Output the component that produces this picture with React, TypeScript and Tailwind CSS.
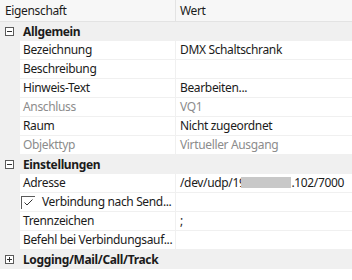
import React from "react";

type Row =
  | { kind: "cat"; label: string; open: boolean }
  | { kind: "item"; label: string; value?: React.ReactNode; dim?: boolean; check?: boolean };

const rows: Row[] = [
  { kind: "cat", label: "Allgemein", open: true },
  { kind: "item", label: "Bezeichnung", value: "DMX Schaltschrank" },
  { kind: "item", label: "Beschreibung" },
  { kind: "item", label: "Hinweis-Text", value: "Bearbeiten..." },
  { kind: "item", label: "Anschluss", value: "VQ1", dim: true },
  { kind: "item", label: "Raum", value: "Nicht zugeordnet" },
  { kind: "item", label: "Objekttyp", value: "Virtueller Ausgang", dim: true },
  { kind: "cat", label: "Einstellungen", open: true },
  {
    kind: "item",
    label: "Adresse",
    value: (
      <span className="relative">
        /dev/udp/19
        <span className="inline-block w-[50px] h-[11px] bg-[#c8c8c8] -ml-[4px] align-[-1px]" />
        .102/7000
      </span>
    ),
  },
  { kind: "item", label: "Verbindung nach Send...", check: true },
  { kind: "item", label: "Trennzeichen", value: ";" },
  { kind: "item", label: "Befehl bei Verbindungsauf..." },
  { kind: "cat", label: "Logging/Mail/Call/Track", open: false },
];

const Expander: React.FC<{ open: boolean }> = ({ open }) => (
  <span className="relative w-[9px] h-[9px] border border-[#5a5a5a] bg-white box-border ml-[5px] mr-[9px] shrink-0">
    <span className="absolute left-[1px] top-[3px] w-[5px] h-px bg-[#333]" />
    {!open && <span className="absolute left-[3px] top-[1px] w-px h-[5px] bg-[#333]" />}
  </span>
);

export default function App() {
  return (
    <div
      className="w-[352px] h-[280px] bg-white text-[12px] tracking-[-0.35px] text-[#1b1b1b] overflow-hidden"
      style={{ fontFamily: '"Noto Sans", "Open Sans", sans-serif' }}
    >
      <div className="flex h-[22px] bg-[#f7f7f7] border-b border-[#e3e3e3] box-border">
        <div className="w-[176px] border-r border-[#e3e3e3] flex items-center pl-[5px]">Eigenschaft</div>
        <div className="flex-1 flex items-center pl-[4px]">Wert</div>
      </div>
      {rows.map((r, i) =>
        r.kind === "cat" ? (
          <div key={i} className="flex items-center h-[19px] bg-[#f0f0f0] font-bold">
            <Expander open={r.open} />
            <span>{r.label}</span>
          </div>
        ) : (
          <div key={i} className="flex h-[19px] bg-[#f0f0f0]">
            <div className="w-[20px] shrink-0" />
            <div
              className={`w-[156px] bg-white border-b border-r border-[#f0f0f0] flex items-center whitespace-nowrap overflow-hidden ${
                r.check ? "pl-[1px]" : "pl-[3px]"
              } ${r.dim ? "text-[#8c8c8c]" : ""}`}
            >
              {r.check && (
                <span className="w-[14px] h-[13px] border-l border-t border-[#5a5a5a] mr-[7px] flex items-center justify-center shrink-0">
                  <svg width="9" height="7" viewBox="0 0 9 7">
                    <path d="M0.5 3.5 L3 6 L8.5 0.5" fill="none" stroke="#333" strokeWidth="1" />
                  </svg>
                </span>
              )}
              {r.label}
            </div>
            <div
              className={`flex-1 bg-white border-b border-[#f0f0f0] flex items-center pl-[4px] whitespace-nowrap ${
                r.dim ? "text-[#8c8c8c]" : ""
              }`}
            >
              {r.value}
            </div>
          </div>
        )
      )}
    </div>
  );
}
